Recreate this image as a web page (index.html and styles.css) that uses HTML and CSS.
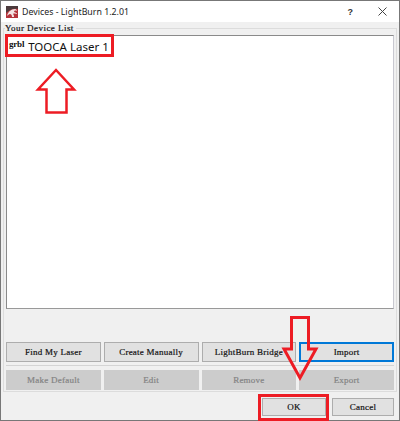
FILE: index.html
```html
<!DOCTYPE html>
<html lang="en">
<head>
    <meta charset="UTF-8">
    <meta name="viewport" content="width=device-width, initial-scale=1.0">
    <title>Devices - LightBurn 1.2.01</title>
    <link rel="stylesheet" href="styles.css">
</head>
<body>
<div class="window">
    <div class="titlebar">
        <svg class="app-icon" viewBox="0 0 12 12">
            <rect width="12" height="12" fill="#b5333b"/>
            <path d="M0 0H12V3C8 2 4 3 0 7Z" fill="#4b3a3c"/>
            <path d="M1 10C2 6 5 3 9 3c1 0 2 1 2 2-2-1-3 0-3 1 1 0 3 1 3 2-1 0-3-1-4 0 1 1 1 2 1 3H6C6 9 5 8 4 8c-1 0-2 1-3 2z" fill="#f3e4e4"/>
        </svg>
        <span class="title">Devices - LightBurn 1.2.01</span>
        <span class="help">?</span>
        <svg class="close" viewBox="0 0 9 9"><path d="M.5.5l8 8M8.5.5l-8 8" stroke="#444" stroke-width="1" fill="none"/></svg>
    </div>
    <div class="content">
        <div class="group">
            <div class="group-title">Your Device List</div>
            <div class="list">
                <div class="device">
                    <span class="grbl">grbl</span>
                    <span class="device-name">TOOCA Laser 1</span>
                </div>
            </div>
            <div class="btn-grid first-row">
                <button class="btn">Find My Laser</button>
                <button class="btn">Create Manually</button>
                <button class="btn">LightBurn Bridge</button>
                <button class="btn btn-focus">Import</button>
            </div>
            <div class="sep"></div>
            <div class="btn-grid">
                <button class="btn" disabled>Make Default</button>
                <button class="btn" disabled>Edit</button>
                <button class="btn" disabled>Remove</button>
                <button class="btn" disabled>Export</button>
            </div>
        </div>
        <div class="footer">
            <button class="btn btn-ok">OK</button>
            <button class="btn btn-cancel">Cancel</button>
        </div>
    </div>

    <!-- red annotations drawn on top of the screenshot -->
    <svg class="marks" viewBox="0 0 400 421">
        <g fill="none" stroke="#ed1c24" stroke-width="3">
            <rect x="6.5" y="35.5" width="106" height="20"/>
            <path d="M56 70L38 89.5H46.5V112.5H66.5V89.5H74Z" stroke-width="2.5"/>
            <path d="M291.5 317.5H308.5V349H316L300 378L284 349H291.5Z"/>
            <rect x="259.5" y="395.5" width="68" height="24"/>
        </g>
    </svg>
</div>
</body>
</html>
```

FILE: styles.css
```css
html, body {
    margin: 0;
    padding: 0;
}
body {
    width: 400px;
    height: 421px;
    overflow: hidden;
    font-family: "Liberation Serif", serif;
    font-size: 9px;
}
.window {
    position: relative;
    box-sizing: border-box;
    width: 400px;
    height: 421px;
    border: 1px solid #777;
    display: flex;
    flex-direction: column;
    background-color: #f0f0f0;
}
.titlebar {
    height: 21px;
    background-color: #fff;
    display: flex;
    align-items: center;
    padding-left: 5px;
    flex-shrink: 0;
}
.app-icon {
    width: 12px;
    height: 12px;
    margin-right: 4px;
}
.title {
    font-family: "Noto Sans", sans-serif;
    font-size: 8.8px;
    color: #222;
    flex-grow: 1;
}
.help {
    font-family: "Liberation Sans", sans-serif;
    font-weight: bold;
    font-size: 9px;
    color: #333;
    margin-right: 25px;
}
.close {
    width: 9px;
    height: 9px;
    margin-right: 12px;
}
.content {
    flex-grow: 1;
    display: flex;
    flex-direction: column;
}
.group {
    margin: 6px 2px 0;
    padding: 0 2px 1px;
    border: 1px solid #dcdcdc;
}
.group-title {
    width: fit-content;
    height: 12px;
    margin: -7px 0 0 -1px;
    padding-right: 2px;
    line-height: 12px;
    background-color: #f0f0f0;
    color: #111;
    letter-spacing: 0.45px;
    -webkit-text-stroke: 0.2px #111;
}
.list {
    height: 274px;
    margin-top: 1px;
    box-sizing: border-box;
    background-color: #fff;
    border: 1px solid #8a8a8a;
    border-right-color: #c8c8d0;
    border-bottom-color: #999;
}
.device {
    display: flex;
    align-items: center;
    height: 20px;
    padding-left: 2px;
    gap: 4px;
}
.grbl {
    font-size: 9px;
    font-weight: bold;
    letter-spacing: -0.2px;
    color: #111;
    position: relative;
    top: -2px;
}
.device-name {
    font-family: "Noto Sans", sans-serif;
    font-size: 11.5px;
    color: #111;
}
.first-row {
    margin-top: 33px;
}
.btn-grid {
    display: grid;
    grid-template-columns: repeat(4, 1fr);
    column-gap: 3px;
}
.btn {
    box-sizing: border-box;
    height: 20px;
    padding: 0;
    font-family: "Liberation Serif", serif;
    font-size: 9px;
    letter-spacing: 0.25px;
    -webkit-text-stroke: 0.2px #111;
    color: #111;
    background-color: #e1e1e1;
    border: 1px solid #adadad;
}
.btn:disabled {
    background-color: #ccc;
    border-color: #ccc;
    color: #838383;
    -webkit-text-stroke: 0.2px #838383;
}
.btn-focus {
    border: 1px solid #0078d7;
    box-shadow: inset 0 0 0 1px #0078d7;
}
.sep {
    height: 1px;
    margin: 3px 0 4px;
    background-color: #d4d4d4;
}
.footer {
    display: flex;
    justify-content: flex-end;
    gap: 6px;
    padding: 6px 5px 0 0;
}
.footer .btn {
    height: 18px;
}
.btn-ok {
    width: 64px;
}
.btn-cancel {
    width: 62px;
}
.marks {
    position: absolute;
    left: -1px;
    top: -1px;
    width: 400px;
    height: 421px;
    pointer-events: none;
}
```
